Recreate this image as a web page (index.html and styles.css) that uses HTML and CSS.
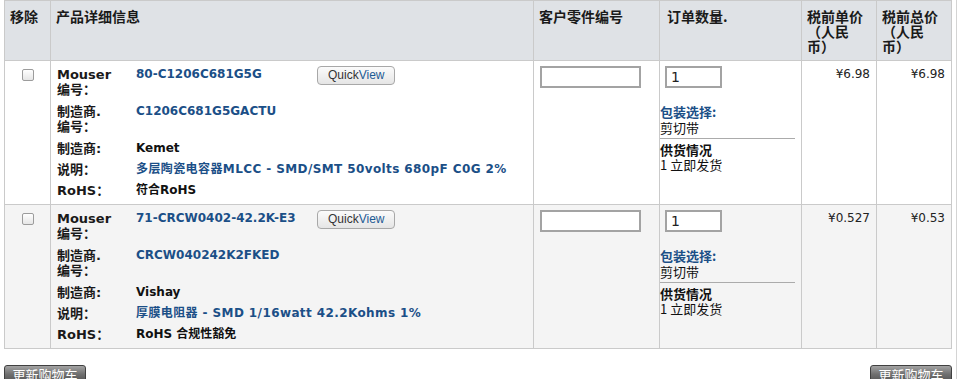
FILE: index.html
```html
<!DOCTYPE html>
<html lang="zh-CN">
<head>
  <meta charset="UTF-8">
  <title>购物车</title>
  <link rel="stylesheet" href="styles.css">
</head>
<body>

<div class="page">
  <table class="cart">
    <colgroup>
      <col class="c-remove">
      <col class="c-detail">
      <col class="c-custom">
      <col class="c-qty">
      <col class="c-price">
      <col class="c-price">
    </colgroup>
    <thead>
      <tr>
        <th>移除</th>
        <th>产品详细信息</th>
        <th>客户零件编号</th>
        <th class="th-qty">订单数量.</th>
        <th>税前单价（人民币）</th>
        <th>税前总价（人民币）</th>
      </tr>
    </thead>
    <tbody>
      <tr>
        <td class="remove"><input type="checkbox" class="check"></td>
        <td class="detail">
          <div class="specs">
            <div class="lbl two">Mouser<br>编号：</div>
            <div class="val two">
              <div class="first">
                <a href="#" class="part">80-C1206C681G5G</a>
                <button class="quickview">Quick<span>View</span></button>
              </div>
            </div>
            <div class="lbl two">制造商.<br>编号：</div>
            <div class="val two"><a href="#">C1206C681G5GACTU</a></div>
            <div class="lbl">制造商:</div>
            <div class="val">Kemet</div>
            <div class="lbl">说明：</div>
            <div class="val"><a href="#" class="desc">多层陶瓷电容器MLCC - SMD/SMT 50volts 680pF C0G 2%</a></div>
            <div class="lbl">RoHS：</div>
            <div class="val">符合RoHS</div>
          </div>
        </td>
        <td class="custom"><input type="text" class="field field-wide"></td>
        <td class="qty">
          <input type="text" class="field field-qty" value="1">
          <div class="pack"><a href="#">包装选择:</a><br>剪切带</div>
          <div class="stock"><b>供货情况</b><br>1 立即发货</div>
        </td>
        <td class="price">¥6.98</td>
        <td class="price">¥6.98</td>
      </tr>
      <tr class="alt">
        <td class="remove"><input type="checkbox" class="check"></td>
        <td class="detail">
          <div class="specs">
            <div class="lbl two">Mouser<br>编号：</div>
            <div class="val two">
              <div class="first">
                <a href="#" class="part">71-CRCW0402-42.2K-E3</a>
                <button class="quickview">Quick<span>View</span></button>
              </div>
            </div>
            <div class="lbl two">制造商.<br>编号：</div>
            <div class="val two"><a href="#">CRCW040242K2FKED</a></div>
            <div class="lbl">制造商:</div>
            <div class="val">Vishay</div>
            <div class="lbl">说明：</div>
            <div class="val"><a href="#" class="desc">厚膜电阻器 - SMD 1/16watt 42.2Kohms 1%</a></div>
            <div class="lbl">RoHS：</div>
            <div class="val">RoHS 合规性豁免</div>
          </div>
        </td>
        <td class="custom"><input type="text" class="field field-wide"></td>
        <td class="qty">
          <input type="text" class="field field-qty" value="1">
          <div class="pack"><a href="#">包装选择:</a><br>剪切带</div>
          <div class="stock"><b>供货情况</b><br>1 立即发货</div>
        </td>
        <td class="price">¥0.527</td>
        <td class="price">¥0.53</td>
      </tr>
    </tbody>
  </table>

  <div class="actions">
    <button class="update">更新购物车</button>
    <button class="update">更新购物车</button>
  </div>
</div>

</body>
</html>
```

FILE: styles.css
```css
body {
  margin: 0;
  font-family: "DejaVu Sans", "Noto Sans CJK SC", sans-serif;
  color: #222;
  background: #fff;
}
a {
  color: #1b4f87;
  text-decoration: none;
}
.page {
  box-sizing: border-box;
  width: 957px;
  min-height: 379px;
  padding-left: 4px;
  border-right: 1px solid #d4d4d4;
}

/* cart table */
.cart {
  border-collapse: collapse;
  table-layout: fixed;
  width: 948px;
}
.c-remove { width: 46px; }
.c-detail { width: 483px; }
.c-custom { width: 126px; }
.c-qty { width: 142px; }
.c-price { width: 75px; }
.cart th, .cart td {
  border: 1px solid #cacaca;
  vertical-align: top;
  text-align: left;
}
.cart th {
  background: #dfe2e6;
  font: bold 14px/15px "Noto Sans CJK SC", sans-serif;
  color: #1a1a1a;
  padding: 8px 5px 6px;
  height: 45px;
  text-spacing-trim: space-all;
}
.cart th.th-qty {
  padding-left: 7px;
}
.cart tbody td {
  padding: 5px 6px 6px;
}
.cart tr.alt td {
  background: #f4f4f4;
}

.remove {
  text-align: center !important;
}
.check {
  appearance: none;
  width: 12px;
  height: 12px;
  margin: 1px 0 0;
  border: 1px solid #9c9c9c;
  border-radius: 2px;
  background: linear-gradient(#fff, #e6e6e6);
}

/* product details */
.cart td.detail {
  padding-top: 6px;
}
.specs {
  display: grid;
  grid-template-columns: 79px auto;
  row-gap: 6px;
  line-height: 15px;
}
.lbl {
  font-weight: bold;
  font-size: 13px;
  color: #1a1a1a;
}
.val {
  font-weight: bold;
  font-size: 12px;
  color: #111;
}
.two {
  min-height: 31px;
}
.desc {
  letter-spacing: 0.4px;
}
.first {
  display: flex;
  align-items: flex-start;
}
.part {
  width: 181px;
}
.quickview {
  height: 19px;
  margin-top: -1px;
  padding: 0 10px;
  border: 1px solid #a8a8a8;
  border-radius: 4px;
  background: linear-gradient(#fbfbfb, #e5e5e5);
  font: 12px/17px "Liberation Sans", Arial, sans-serif;
  color: #333;
}
.quickview span {
  color: #1c5a94;
}

/* inputs */
.field {
  box-sizing: border-box;
  height: 22px;
  border: 2px solid #a3a3a3;
  background: #fff;
  padding: 0 4px;
  font: 14px "DejaVu Sans", sans-serif;
  color: #222;
}
.field-wide {
  width: 101px;
}
.field-qty {
  width: 57px;
  margin-left: 5px;
}

/* order quantity */
.cart td.qty {
  padding-left: 0;
  font: 13px/16px "Noto Sans CJK SC", sans-serif;
  color: #111;
}
.pack {
  margin-top: 16px;
  width: 135px;
}
.pack a {
  font-weight: bold;
}
.stock {
  width: 135px;
  margin-top: 2px;
  padding-top: 3px;
  border-top: 1px solid #ababab;
  line-height: 15px;
}

.cart td.price {
  text-align: right;
  font: 12px/15px "DejaVu Sans", sans-serif;
  padding-top: 6px;
  color: #222;
}

/* bottom buttons */
.actions {
  width: 948px;
  display: flex;
  justify-content: space-between;
  margin-top: 16px;
}
.update {
  width: 82px;
  height: 20px;
  padding: 0;
  border: 1px solid #404040;
  border-radius: 3px 3px 0 0;
  background: linear-gradient(#a4a4a4, #707070 45%, #4c4c4c);
  color: #fff;
  font: 13px/18px "Noto Sans CJK SC", sans-serif;
}
```
